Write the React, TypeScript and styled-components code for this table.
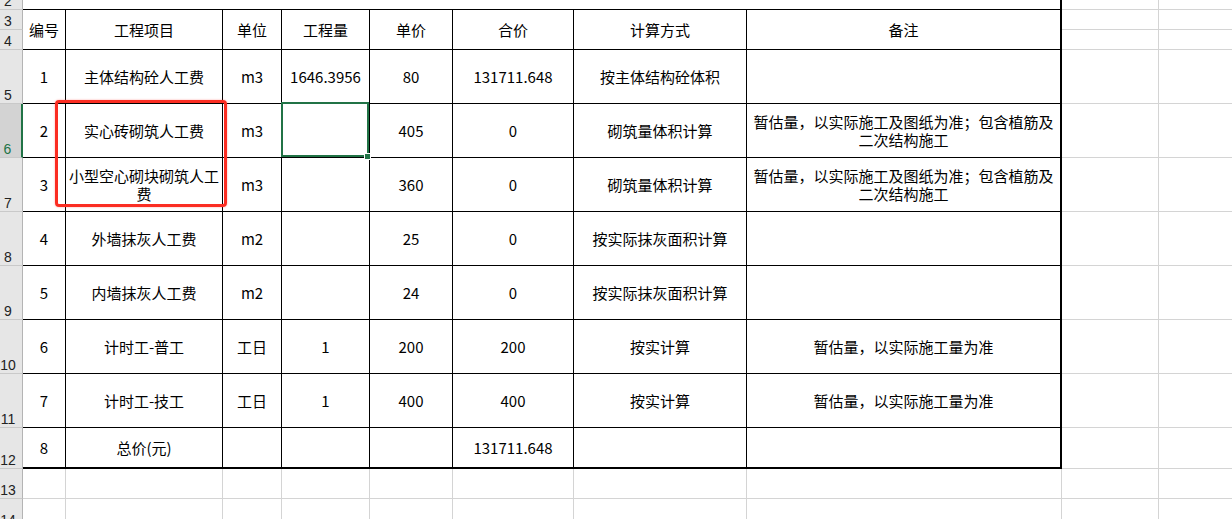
import React from 'react';
import styled, { createGlobalStyle, css } from 'styled-components';

const GlobalStyle = createGlobalStyle`
  html, body { margin: 0; padding: 0; background: #ffffff; }
  body { overflow: hidden; }
  #root { width: 1232px; height: 519px; }
`;

type Line = 'table' | 'thick' | 'grid' | 'none';

const lineCss = (l: Line) => {
  switch (l) {
    case 'table':
      return '1px solid #000000';
    case 'thick':
      return '2px solid #000000';
    case 'grid':
      return '1px solid #d4d4d4';
    default:
      return 'none';
  }
};

const Sheet = styled.div`
  position: relative;
  display: grid;
  grid-template-columns: 23px 43px 157px 59px 88px 83px 121px 173px 315px 97px 1fr;
  grid-template-rows: 10px 20px 20px repeat(7, 54px) 41px 30px 30px;
  width: 1232px;
  height: 519px;
  overflow: hidden;
  background: #ffffff;
`;

const RowHead = styled.div<{ $selected?: boolean }>`
  box-sizing: border-box;
  display: flex;
  align-items: flex-end;
  justify-content: center;
  padding: 0 6px 1px 0;
  overflow: hidden;
  background: ${(p) => (p.$selected ? '#d3d3d3' : '#e6e6e6')};
  border-right: ${(p) => (p.$selected ? '2px solid #217346' : '1px solid #b4b4b4')};
  border-bottom: 1px solid #c9c9c9;
  color: ${(p) => (p.$selected ? '#217346' : '#222222')};
  font-family: 'Liberation Sans', Arial, sans-serif;
  font-size: 14px;
  line-height: 14px;
`;

const Cell = styled.div<{ $right: Line; $bottom: Line; $span?: number; $rows?: number; $selected?: boolean }>`
  box-sizing: border-box;
  position: relative;
  display: flex;
  align-items: center;
  justify-content: center;
  text-align: center;
  padding: 0 2px;
  min-width: 0;
  border-right: ${(p) => lineCss(p.$right)};
  border-bottom: ${(p) => lineCss(p.$bottom)};
  color: #000000;
  font-family: 'Noto Sans CJK SC', 'Noto Sans', sans-serif;
  font-size: 15px;
  line-height: 18px;
  ${(p) => p.$span && css`grid-column: span ${p.$span};`}
  ${(p) => p.$rows && css`grid-row: span ${p.$rows};`}
  ${(p) =>
    p.$selected &&
    css`
      &::after {
        content: '';
        position: absolute;
        left: -1px;
        top: -2px;
        right: 0;
        bottom: 0;
        border: 2px solid #217346;
        z-index: 2;
      }
      &::before {
        content: '';
        position: absolute;
        right: -2px;
        bottom: -3px;
        width: 5px;
        height: 5px;
        background: #217346;
        border: 1px solid #ffffff;
        z-index: 3;
      }
    `}
`;

const Annotation = styled.div`
  position: absolute;
  left: 55px;
  top: 100px;
  width: 172px;
  height: 107px;
  box-sizing: border-box;
  border: 3px solid #fb2d22;
  border-radius: 4px;
  box-shadow: 0 0 2px rgba(255, 40, 30, 0.45);
  pointer-events: none;
  z-index: 5;
`;

const headers = ['编号', '工程项目', '单位', '工程量', '单价', '合价', '计算方式', '备注'];

const remarkA = '暂估量，以实际施工及图纸为准；包含植筋及二次结构施工';
const remarkB = '暂估量，以实际施工量为准';

const body: string[][] = [
  ['1', '主体结构砼人工费', 'm3', '1646.3956', '80', '131711.648', '按主体结构砼体积', ''],
  ['2', '实心砖砌筑人工费', 'm3', '', '405', '0', '砌筑量体积计算', remarkA],
  ['3', '小型空心砌块砌筑人工费', 'm3', '', '360', '0', '砌筑量体积计算', remarkA],
  ['4', '外墙抹灰人工费', 'm2', '', '25', '0', '按实际抹灰面积计算', ''],
  ['5', '内墙抹灰人工费', 'm2', '', '24', '0', '按实际抹灰面积计算', ''],
  ['6', '计时工-普工', '工日', '1', '200', '200', '按实计算', remarkB],
  ['7', '计时工-技工', '工日', '1', '400', '400', '按实计算', remarkB],
  ['8', '总价(元)', '', '', '', '131711.648', '', ''],
];

const Outside: React.FC = () => (
  <>
    <Cell $right="grid" $bottom="grid" />
    <Cell $right="none" $bottom="grid" />
  </>
);

export default function App() {
  return (
    <>
      <GlobalStyle />
      <Sheet>
        {/* row 2 */}
        <RowHead>2</RowHead>
        <Cell $span={8} $right="thick" $bottom="table" />
        <Outside />

        {/* rows 3-4: header */}
        <RowHead>3</RowHead>
        {headers.map((h, i) => (
          <Cell key={h} $rows={2} $right={i === 7 ? 'thick' : 'table'} $bottom="table">
            {h}
          </Cell>
        ))}
        <Outside />
        <RowHead>4</RowHead>
        <Outside />

        {/* rows 5-12 */}
        {body.map((r, ri) => {
          const rowNo = ri + 5;
          const last = ri === body.length - 1;
          return (
            <React.Fragment key={rowNo}>
              <RowHead $selected={rowNo === 6}>{rowNo}</RowHead>
              {r.map((v, ci) => (
                <Cell
                  key={ci}
                  $right={ci === 7 ? 'thick' : 'table'}
                  $bottom={last ? 'thick' : 'table'}
                  $selected={rowNo === 6 && ci === 3}
                >
                  {v}
                </Cell>
              ))}
              <Outside />
            </React.Fragment>
          );
        })}

        {/* rows 13-14 */}
        {[13, 14].map((n) => (
          <React.Fragment key={n}>
            <RowHead>{n}</RowHead>
            {Array.from({ length: 8 }).map((_, ci) => (
              <Cell key={ci} $right="grid" $bottom="grid" />
            ))}
            <Outside />
          </React.Fragment>
        ))}

        <Annotation />
      </Sheet>
    </>
  );
}
